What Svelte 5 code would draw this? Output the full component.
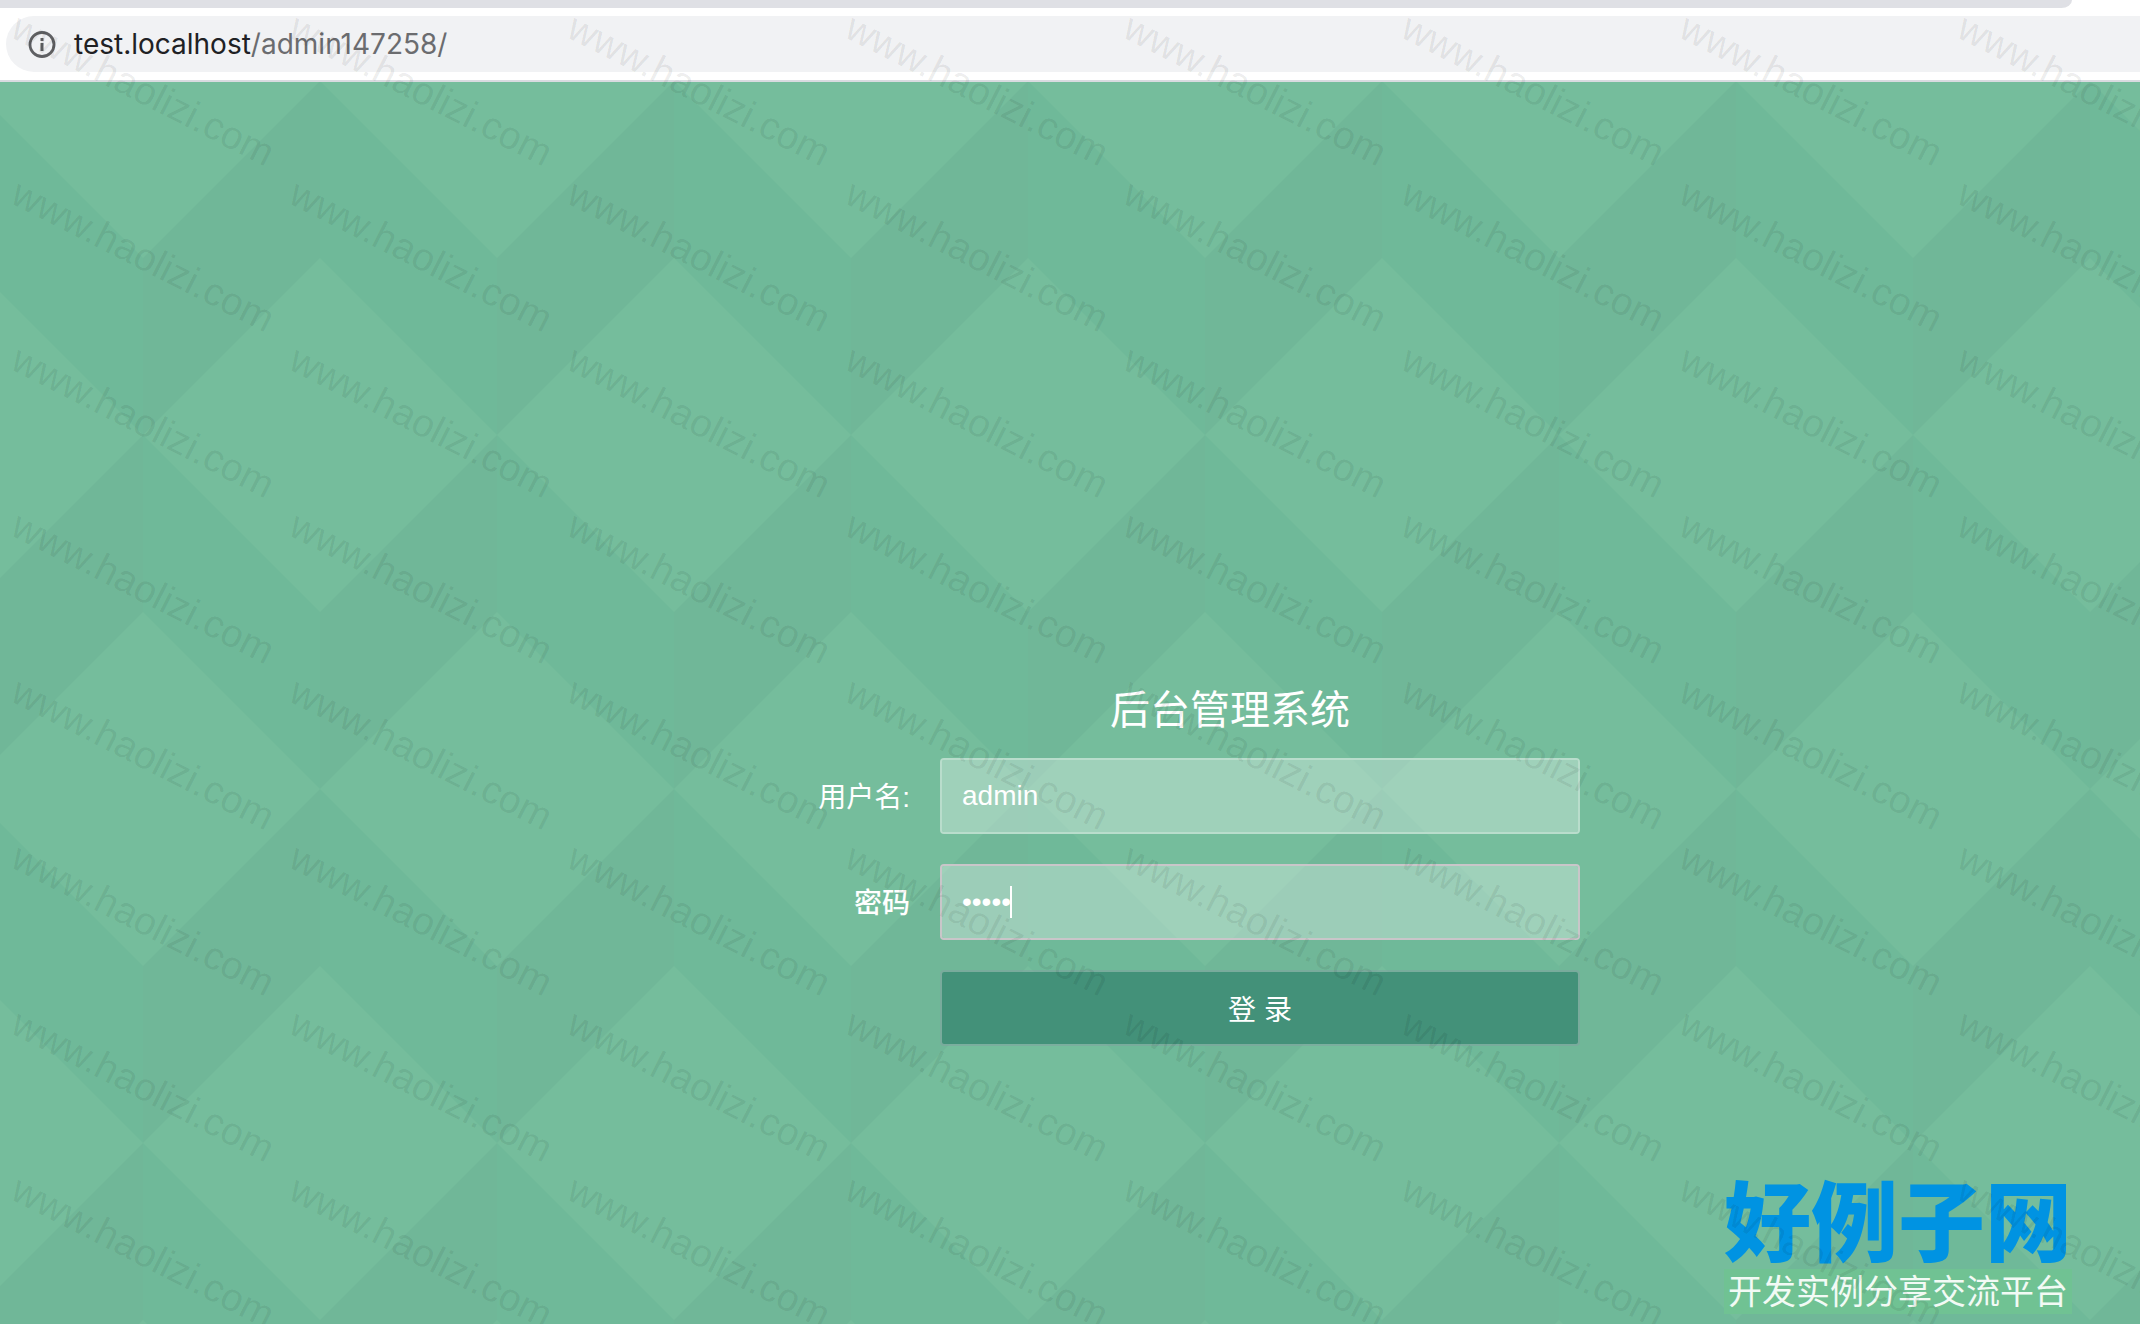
<script>
  let username = $state('admin');
  let password = $state('admin');
  const marks = Array.from({ length: 64 }, (_, i) => i);
</script>

<div class="page">
  <header>
    <div class="tabs"></div>
    <div class="toolbar">
      <div class="omnibox">
        <button class="info" type="button" aria-label="Site information">
          <svg viewBox="0 0 28 28" width="28" height="28">
            <circle cx="14" cy="14.5" r="12" fill="none" stroke="#5f6063" stroke-width="2.8" />
            <rect x="12.5" y="13" width="3" height="8" fill="#5f6063" />
            <rect x="12.5" y="8" width="3" height="3" fill="#5f6063" />
          </svg>
        </button>
        <div class="url"><span>test.localhost</span>/admin147258/</div>
      </div>
    </div>
  </header>

  <main>
    <svg class="backdrop" aria-hidden="true">
      <defs>
        <pattern id="facets" x="143" y="-1" width="354" height="708" patternUnits="userSpaceOnUse">
          <rect width="354" height="708" fill="#6fb999" />
          <g fill="#70b798">
            <path d="M0 177L177 0V177L0 354Z" />
            <path d="M177 531L354 354V531L177 708Z" />
          </g>
          <g fill="#75bd9c">
            <path d="M0 0H177L0 177Z" />
            <path d="M177 0H354V177Z" />
            <path d="M177 177L354 354L177 531L0 354Z" />
            <path d="M0 531L177 708H0Z" />
            <path d="M354 531V708H177Z" />
          </g>
        </pattern>
      </defs>
      <rect width="100%" height="100%" fill="url(#facets)" />
    </svg>

    <form onsubmit={(e) => e.preventDefault()}>
      <h1>后台管理系统</h1>
      <label for="username">用户名:</label>
      <div class="field"><input id="username" type="text" bind:value={username} /></div>
      <label for="password">密码</label>
      <div class="field active">
        <input id="password" type="password" bind:value={password} />
        <i class="caret"></i>
      </div>
      <button class="submit" type="submit">登 录</button>
    </form>
  </main>

  <aside class="brand">
    <strong>好例子网</strong>
    <span>开发实例分享交流平台</span>
  </aside>

  <div class="watermark" aria-hidden="true">
    {#each marks as mark (mark)}
      <div class="cell"><span>www.haolizi.com</span></div>
    {/each}
  </div>
</div>

<style>
  :global(body) {
    background: #75bd9c;
  }
  .page {
    position: relative;
    display: flex;
    flex-direction: column;
    min-height: 100vh;
    overflow: hidden;
    font-family: 'Liberation Sans', 'Noto Sans CJK SC', sans-serif;
  }
  header {
    background: #fff;
    border-bottom: 2px solid #d9dbe0;
  }
  .tabs {
    height: 8px;
    margin-right: 68px;
    background: #dfe0e5;
    border-bottom-right-radius: 16px 12px;
  }
  .toolbar {
    padding: 8px 0 8px 6px;
  }
  .omnibox {
    display: flex;
    align-items: center;
    gap: 18px;
    height: 56px;
    padding-left: 22px;
    background: #f1f2f4;
    border-radius: 28px 0 0 28px;
  }
  .info {
    display: flex;
    padding: 0;
    border: 0;
    background: none;
  }
  .url {
    color: #6b6c6f;
    font: 28px/40px Inter, 'Liberation Sans', sans-serif;
  }
  .url span {
    color: #202124;
  }
  main {
    position: relative;
    flex: 1;
    display: flex;
    justify-content: center;
    align-items: flex-start;
    padding: 598px 0 80px 200px;
  }
  .backdrop {
    position: absolute;
    inset: 0;
    width: 100%;
    height: 100%;
  }
  form {
    position: relative;
    display: grid;
    grid-template-columns: 150px 640px;
    gap: 30px;
    align-items: center;
    color: #fff;
    font-size: 28px;
  }
  h1 {
    grid-column: 1 / -1;
    margin: 0 0 -12px;
    padding-left: 120px;
    text-align: center;
    font-size: 40px;
    line-height: 60px;
    font-weight: 400;
  }
  label {
    padding-bottom: 2px;
    text-align: right;
    white-space: nowrap;
  }
  label[for='password'] {
    font-weight: 500;
  }
  .field {
    position: relative;
  }
  input {
    display: block;
    box-sizing: border-box;
    width: 100%;
    height: 76px;
    padding: 0 20px;
    border: 2px solid #b9ddcc;
    border-radius: 4px;
    outline: 0;
    background: rgba(255, 255, 255, 0.31);
    background-clip: padding-box;
    color: #fff;
    font: inherit;
  }
  .active input {
    border-color: #c9c6c9;
  }
  .caret {
    position: absolute;
    left: 70px;
    top: 22px;
    width: 2px;
    height: 32px;
    background: #fff;
  }
  .submit {
    grid-column: 2;
    height: 76px;
    padding: 0;
    border: 2px solid rgba(130, 160, 160, 0.5);
    border-radius: 4px;
    background: #439179;
    background-clip: padding-box;
    color: #fff;
    font: inherit;
  }
  .brand {
    position: absolute;
    right: 68px;
    bottom: 10px;
    display: flex;
    flex-direction: column;
    align-items: center;
    white-space: nowrap;
  }
  .brand strong {
    padding-bottom: 4px;
    color: #0093e2;
    font: 900 87px/96px 'Noto Sans CJK SC', sans-serif;
  }
  .brand span {
    padding: 0 4px 4px;
    background: #70c293;
    color: #f2faf5;
    font: 34px/41px 'Noto Sans CJK SC', sans-serif;
  }
  .watermark {
    position: absolute;
    inset: 7px 0 0 4px;
    display: grid;
    grid-template-columns: repeat(8, 278px);
    grid-auto-rows: 166px;
    overflow: hidden;
    pointer-events: none;
  }
  .cell {
    display: flex;
    align-items: center;
    justify-content: center;
  }
  .cell span {
    flex: none;
    color: rgba(0, 0, 0, 0.08);
    font: 39px/40px 'Liberation Sans', sans-serif;
    transform: rotate(27deg);
  }
</style>
